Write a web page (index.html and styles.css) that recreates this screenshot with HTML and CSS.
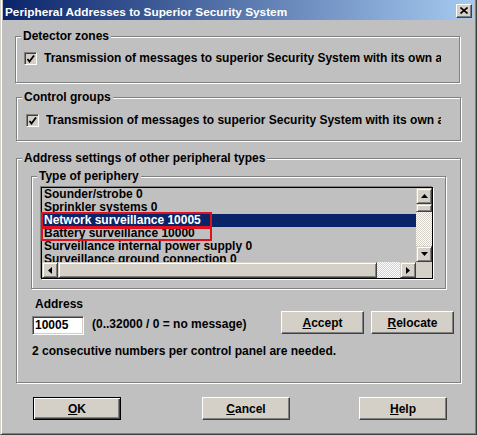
FILE: index.html
```html
<!DOCTYPE html>
<html>
<head>
<meta charset="utf-8">
<link rel="stylesheet" href="styles.css">
</head>
<body>
<div class="window">
  <div class="titlebar">
    <span class="title">Peripheral Addresses to Superior Security System</span>
    <span class="close"><svg width="8" height="7" viewBox="0 0 8 7"><path d="M0.5 0.5 L7.5 6.5 M7.5 0.5 L0.5 6.5" stroke="#000" stroke-width="1.6" fill="none"/></svg></span>
  </div>
  <div class="client">
    <div class="group g-detector">
      <div class="group-title">Detector zones</div>
      <div class="check-row">
        <span class="checkbox"><svg width="9" height="9" viewBox="0 0 9 9"><path d="M1.5 5 L3.5 7.5 L8 1.5" stroke="#000" stroke-width="1.8" fill="none"/></svg></span>
        <span class="check-label">Transmission of messages to superior Security System with its own address</span>
      </div>
    </div>
    <div class="group g-control">
      <div class="group-title">Control groups</div>
      <div class="check-row">
        <span class="checkbox"><svg width="9" height="9" viewBox="0 0 9 9"><path d="M1.5 5 L3.5 7.5 L8 1.5" stroke="#000" stroke-width="1.8" fill="none"/></svg></span>
        <span class="check-label">Transmission of messages to superior Security System with its own address</span>
      </div>
    </div>
    <div class="group g-address">
      <div class="group-title">Address settings of other peripheral types</div>
      <div class="group g-type">
        <div class="group-title">Type of periphery</div>
        <div class="listbox">
          <div class="list">
            <div class="item">Sounder/strobe 0</div>
            <div class="item">Sprinkler systems 0</div>
            <div class="item selected">Network surveillance 10005</div>
            <div class="item">Battery surveillance 10000</div>
            <div class="item">Surveillance internal power supply 0</div>
            <div class="item">Surveillance ground connection 0</div>
          </div>
          <div class="vscroll">
            <div class="sb-btn"><svg width="7" height="4" viewBox="0 0 7 4"><path d="M3.5 0 L7 4 L0 4 Z" fill="#000"/></svg></div>
            <div class="sb-thumb-v"></div>
            <div class="sb-track"></div>
            <div class="sb-btn"><svg width="7" height="4" viewBox="0 0 7 4"><path d="M0 0 L7 0 L3.5 4 Z" fill="#000"/></svg></div>
          </div>
          <div class="hscroll">
            <div class="sb-btn"><svg width="4" height="7" viewBox="0 0 4 7"><path d="M0 3.5 L4 0 L4 7 Z" fill="#000"/></svg></div>
            <div class="sb-thumb-h"></div>
            <div class="sb-track"></div>
            <div class="sb-btn"><svg width="4" height="7" viewBox="0 0 4 7"><path d="M0 0 L4 3.5 L0 7 Z" fill="#000"/></svg></div>
          </div>
          <div class="corner"></div>
          <div class="mark mark-1"></div>
          <div class="mark mark-2"></div>
        </div>
      </div>
      <div class="addr-label">Address</div>
      <div class="addr-row">
        <div class="input">10005</div>
        <div class="range">(0..32000 / 0 = no message)</div>
        <div class="btn btn-accept"><u>A</u>ccept</div>
        <div class="btn btn-relocate"><u>R</u>elocate</div>
      </div>
      <div class="note">2 consecutive numbers per control panel are needed.</div>
    </div>
    <div class="footer">
      <div class="btn btn-ok"><u>O</u>K</div>
      <div class="btn btn-cancel"><u>C</u>ancel</div>
      <div class="btn btn-help"><u>H</u>elp</div>
    </div>
  </div>
</div>
</body>
</html>
```
FILE: styles.css
```css
* { box-sizing: border-box; }
html, body { margin: 0; padding: 0; background: #c0c0c0; }
body {
  font-family: "Liberation Sans", Arial, sans-serif;
  font-weight: bold;
  font-size: 12px;
  color: #000;
}
.window {
  width: 477px;
  height: 435px;
  background: #c0c0c0;
  border: 1px solid;
  border-top: 0;
  border-color: transparent #404040 #404040 #d4d0c8;
  box-shadow: inset 1px 0 #fff, inset -1px -1px #808080;
  padding: 0 2px 2px 2px;
  overflow: hidden;
}
.titlebar {
  height: 20px;
  display: flex;
  align-items: center;
  background: linear-gradient(to right, #0a246a, #a6caf0);
  padding-left: 2px;
}
.title {
  flex: 1;
  color: #fff;
  font-size: 11.8px;
  line-height: 14px;
  padding-top: 3px;
  white-space: nowrap;
}
.close {
  width: 16px;
  height: 14px;
  margin-right: 2px;
  margin-top: 1px;
  display: flex;
  align-items: center;
  justify-content: center;
  background: #d4d0c8;
  border: 1px solid;
  border-color: #fff #404040 #404040 #fff;
  box-shadow: inset -1px -1px #808080;
}
.close svg { display: block; }

.group {
  border: 1px solid #808080;
  box-shadow: 1px 1px 0 #fff, inset 1px 1px 0 #fff;
}
.group-title {
  width: fit-content;
  margin: -8px 0 0 5px;
  padding: 0 2px;
  line-height: 14px;
  background: #c0c0c0;
  white-space: nowrap;
}
.g-detector { margin: 16px 0 0 12px; width: 445px; height: 47px; }
.g-control { margin: 14px 0 0 13px; width: 445px; height: 44px; }
.g-address { margin: 17px 0 0 13px; width: 445px; height: 225px; }

.check-row {
  display: flex;
  align-items: center;
  height: 16px;
  margin-top: 7px;
  padding-left: 8px;
}
.g-control .check-row { margin-top: 8px; padding-left: 9px; }
.checkbox {
  width: 13px;
  height: 13px;
  flex: none;
  display: flex;
  align-items: center;
  justify-content: center;
  background: #d4d0c8;
  border: 1px solid;
  border-color: #808080 #fff #fff #808080;
  box-shadow: inset 1px 1px #404040, inset -1px -1px #d4d0c8;
}
.checkbox svg { display: block; }
.check-label {
  margin-left: 7px;
  width: 397px;
  overflow: hidden;
  white-space: nowrap;
  line-height: 14px;
}
.g-control .check-label { width: 395px; }

.g-type { margin: 11px 0 0 14px; width: 415px; height: 113px; }
.listbox {
  position: relative;
  margin: 4px 0 0 9px;
  width: 392px;
  height: 92px;
  border: 1px solid #000;
  box-shadow: -1px -1px 0 #808080, 1px 1px 0 #fff;
  background: #c0c0c0;
  display: grid;
  grid-template-columns: 374px 16px;
  grid-template-rows: 74px 16px;
}
.list { overflow: hidden; }
.item {
  height: 13px;
  line-height: 13px;
  padding-left: 2px;
  white-space: nowrap;
}
.item.selected { background: #0a246a; color: #fff; }
.vscroll { display: flex; flex-direction: column; }
.hscroll { display: flex; }
.sb-btn {
  width: 16px;
  height: 16px;
  flex: none;
  display: flex;
  align-items: center;
  justify-content: center;
  background: #d4d0c8;
  border: 1px solid;
  border-color: #d4d0c8 #404040 #404040 #d4d0c8;
  box-shadow: inset 1px 1px #fff, inset -1px -1px #808080;
}
.sb-btn svg { display: block; }
.sb-thumb-v, .sb-thumb-h {
  background: #d4d0c8;
  border: 1px solid;
  border-color: #d4d0c8 #404040 #404040 #d4d0c8;
  box-shadow: inset 1px 1px #fff, inset -1px -1px #808080;
  flex: none;
}
.sb-thumb-v { height: 8px; }
.sb-thumb-h { width: 319px; height: 16px; }
.sb-track {
  flex: 1;
  background: repeating-conic-gradient(#fff 0 25%, #d4d0c8 0 50%) 0 0 / 2px 2px;
}
.corner { background: #d4d0c8; }
.mark {
  position: absolute;
  left: -1px;
  width: 171px;
  border: 2px solid #e0101c;
}
.mark-1 { top: 24px; height: 16px; }
.mark-2 { top: 39px; height: 14px; }

.addr-label { margin: 8px 0 0 18px; line-height: 14px; }
.addr-row { display: flex; align-items: flex-start; height: 23px; }
.input {
  margin: 5px 0 0 15px;
  width: 52px;
  height: 19px;
  background: #fff;
  border: 1px solid;
  border-color: #808080 #fff #fff #808080;
  box-shadow: inset 1px 1px #404040, inset -1px -1px #d4d0c8;
  padding-left: 2px;
  line-height: 17px;
}
.range { margin: 6px 0 0 8px; line-height: 14px; white-space: nowrap; }
.btn {
  width: 83px;
  height: 23px;
  display: flex;
  align-items: center;
  justify-content: center;
  background: #d4d0c8;
  border: 1px solid;
  border-color: #fff #404040 #404040 #fff;
  box-shadow: inset -1px -1px #808080;
  line-height: 14px;
  white-space: nowrap;
}
.btn u { text-decoration: underline; text-underline-offset: 1px; }
.btn-accept { margin-left: auto; }
.btn-relocate { margin-left: 7px; margin-right: 6px; }
.note { margin: 10px 0 0 15px; line-height: 14px; white-space: nowrap; }

.footer { display: flex; margin-top: 14px; height: 23px; }
.footer .btn { width: 88px; }
.btn-ok { margin-left: 30px; border-color: #000; box-shadow: inset 1px 1px #fff, inset -1px -1px #404040, inset -2px -2px #808080; }
.btn-cancel { margin-left: 81px; }
.btn-help { margin-left: 69px; }
```
